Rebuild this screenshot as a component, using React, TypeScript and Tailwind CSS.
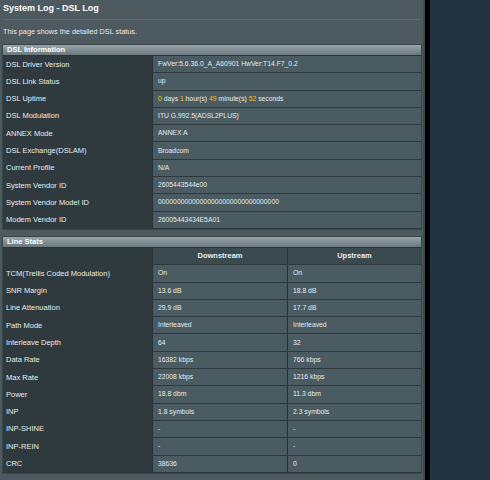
const dslInfo: [string, React.ReactNode][] = [
  ["DSL Driver Version", "FwVer:5.6.36.0_A_A60901 HwVer:T14.F7_0.2"],
  ["DSL Link Status", "up"],
  [
    "DSL Uptime",
    <span>
      <span className="text-[#f2c412]">0</span> days <span className="text-[#f2c412]">1</span> hour(s){" "}
      <span className="text-[#f2c412]">49</span> minute(s) <span className="text-[#f2c412]">52</span> seconds
    </span>,
  ],
  ["DSL Modulation", "ITU G.992.5(ADSL2PLUS)"],
  ["ANNEX Mode", "ANNEX A"],
  ["DSL Exchange(DSLAM)", "Broadcom"],
  ["Current Profile", "N/A"],
  ["System Vendor ID", "2605443544e00"],
  ["System Vendor Model ID", "00000000000000000000000000000000"],
  ["Modem Vendor ID", "26005443434E5A01"],
]

const lineStats: [string, string, string][] = [
  ["TCM(Trellis Coded Modulation)", "On", "On"],
  ["SNR Margin", "13.6 dB", "18.8 dB"],
  ["Line Attenuation", "29.9 dB", "17.7 dB"],
  ["Path Mode", "Interleaved", "Interleaved"],
  ["Interleave Depth", "64", "32"],
  ["Data Rate", "16382 kbps", "766 kbps"],
  ["Max Rate", "22008 kbps", "1216 kbps"],
  ["Power", "18.8 dbm", "11.3 dbm"],
  ["INP", "1.8 symbols", "2.3 symbols"],
  ["INP-SHINE", "-", "-"],
  ["INP-REIN", "-", "-"],
  ["CRC", "38636", "0"],
]

const SectionHeader = ({ title }: { title: string }) => (
  <div className="h-[11px] flex items-center px-[4px] bg-gradient-to-b from-[#98a6aa] to-[#6a787d] border-b border-[#2b3437] font-bold text-white text-[7.5px]">
    {title}
  </div>
)

const App = () => {
  return (
    <div
      className="w-[490px] h-[480px] flex bg-[#223440] text-[7.5px] text-[#e8ecec]"
      style={{ fontFamily: '"Liberation Sans", Arial, sans-serif' }}
    >
      <div className="w-[425px] h-full bg-[#4d5a5f] border-r-2 border-[#3f4a4e] flex flex-col">
        <div className="pt-[1px] pl-[3px] pr-[3px]">
          <div className="h-[16px] flex items-center font-bold text-[9px] text-white">System Log - DSL Log</div>
          <div className="h-px bg-[#3b4649] mt-[2px] border-b border-[#5c686c]"></div>
          <div className="h-[18px] mt-[3px] flex items-center text-[7.3px]">This page shows the detailed DSL status.</div>
        </div>

        <div className="mt-[3px] ml-[2px] w-[420px] border border-[#3a4548]">
          <SectionHeader title="DSL Information" />
          {dslInfo.map(([label, value], i) => (
            <div key={i} className="flex h-[17.3px] border-b border-[#2f393c]">
              <div className="w-[150px] bg-[#2f3a3e] border-r border-[#283134] flex items-center pl-[3px]">{label}</div>
              <div className="flex-1 bg-[#4a5b61] flex items-center pl-[5px] text-[6.8px]">{value}</div>
            </div>
          ))}
        </div>

        <div className="mt-[6px] ml-[2px] w-[420px] border border-[#3a4548]">
          <SectionHeader title="Line Stats" />
          <div className="flex h-[17.3px] border-b border-[#2f393c] font-bold">
            <div className="w-[150px] bg-[#2f3a3e] border-r border-[#283134]"></div>
            <div className="w-[135px] bg-[#3b4a4f] border-r border-[#283134] flex items-center justify-center">Downstream</div>
            <div className="flex-1 bg-[#3b4a4f] flex items-center justify-center">Upstream</div>
          </div>
          {lineStats.map(([label, down, up], i) => (
            <div key={i} className="flex h-[17.3px] border-b border-[#2f393c]">
              <div className="w-[150px] bg-[#2f3a3e] border-r border-[#283134] flex items-center pl-[3px]">{label}</div>
              <div className="w-[135px] bg-[#4a5b61] border-r border-[#283134] flex items-center pl-[5px] text-[6.8px]">{down}</div>
              <div className="flex-1 bg-[#4a5b61] flex items-center pl-[5px] text-[6.8px]">{up}</div>
            </div>
          ))}
        </div>
      </div>
      <div className="w-[5px] h-full bg-black"></div>
      <div className="flex-1"></div>
    </div>
  )
}

export default App
